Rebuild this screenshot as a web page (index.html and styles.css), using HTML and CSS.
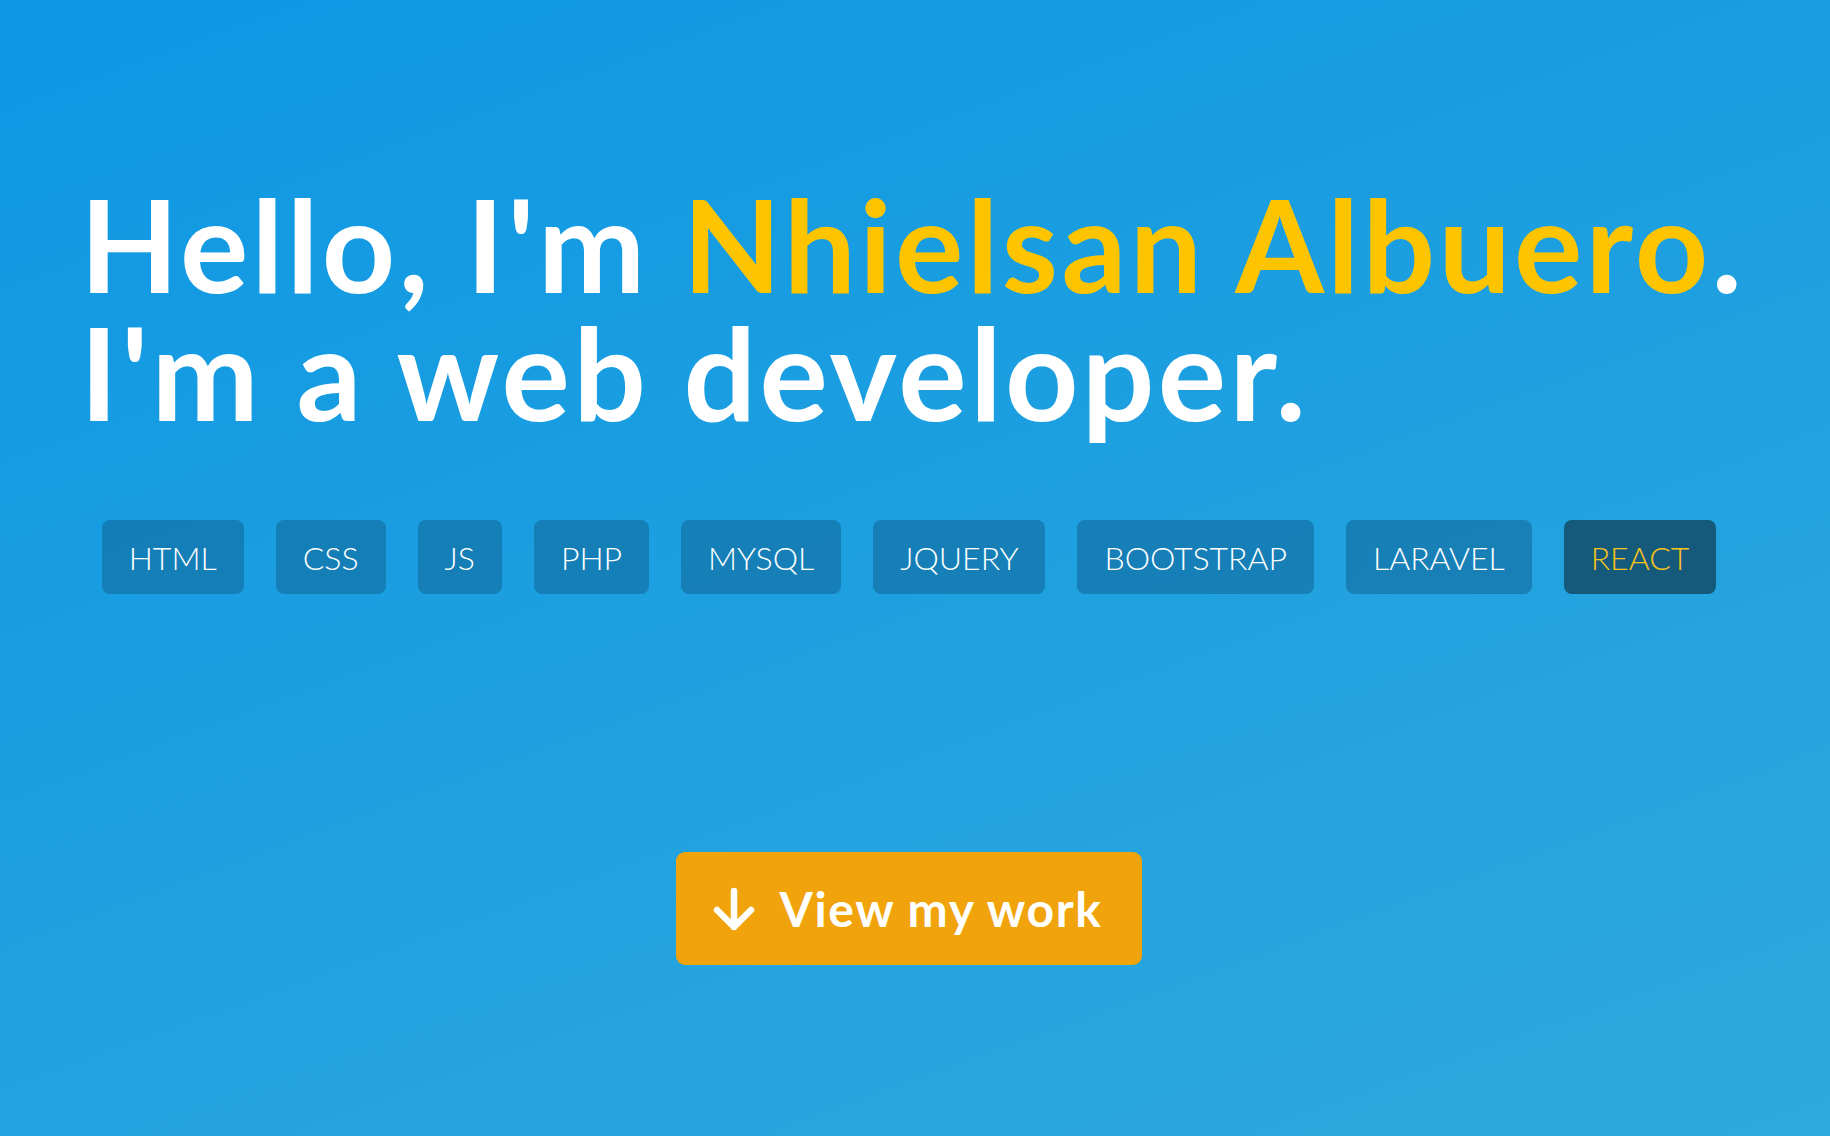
FILE: index.html
```html
<!DOCTYPE html>
<html lang="en">
<head>
<meta charset="utf-8">
<title>Nhielsan Albuero</title>
<link rel="stylesheet" href="styles.css">
</head>
<body>
<main class="hero">
  <h1 class="headline">Hello, I'm <span class="name">Nhielsan Albuero</span>.<br>I'm a web developer.</h1>
  <ul class="skills">
    <li class="skill">HTML</li>
    <li class="skill">CSS</li>
    <li class="skill">JS</li>
    <li class="skill">PHP</li>
    <li class="skill">MYSQL</li>
    <li class="skill">JQUERY</li>
    <li class="skill">BOOTSTRAP</li>
    <li class="skill">LARAVEL</li>
    <li class="skill skill-active">REACT</li>
  </ul>
  <div class="cta-wrap">
    <a class="cta" href="#work">
      <svg class="cta-icon" viewBox="0 0 44 44" width="44" height="44" aria-hidden="true">
        <path d="M22 4 V40 M5 23 L22 40 L39 23" fill="none" stroke="#fff" stroke-width="6.5" stroke-linecap="round" stroke-linejoin="round"/>
      </svg>
      <span>View my work</span>
    </a>
  </div>
</main>
</body>
</html>
```

FILE: styles.css
```css
html, body {
  margin: 0;
  padding: 0;
}

body {
  width: 1830px;
  height: 1136px;
  overflow: hidden;
  background: linear-gradient(160deg, #0d97e4 0%, #1ea0e0 50%, #2fa9dc 100%);
  font-family: "Lato", "Noto Sans", "DejaVu Sans", sans-serif;
  color: #fff;
}

.hero {
  box-sizing: border-box;
  width: 1818px;
  padding: 180px 0 0 80px;
  display: flex;
  flex-direction: column;
}

.headline {
  margin: 0;
  font-size: 128px;
  line-height: 128px;
  font-weight: 700;
  color: #fff;
  letter-spacing: 3.3px;
}

.name {
  color: #ffc400;
}

.skills {
  list-style: none;
  margin: 84px 0 0 -80px;
  padding: 0;
  display: flex;
  justify-content: center;
  gap: 32px;
}

.skill {
  height: 74px;
  padding: 0 27px;
  display: flex;
  align-items: center;
  border-radius: 8px;
  background: rgba(16, 100, 150, 0.55);
  font-size: 32px;
  font-weight: 300;
  color: #fff;
}

.skill-active {
  background: #155a7a;
  color: #f8c41a;
}

.cta-wrap {
  margin: 258px 0 0 -80px;
  display: flex;
  justify-content: center;
}

.cta {
  display: flex;
  align-items: center;
  gap: 24px;
  height: 113px;
  padding: 0 40px 0 36px;
  box-sizing: border-box;
  border-radius: 9px;
  background: #f0a30b;
  color: #fff;
  text-decoration: none;
  font-size: 48px;
  font-weight: 700;
  letter-spacing: 1.6px;
}

.cta-icon {
  display: block;
  flex: none;
}
```
